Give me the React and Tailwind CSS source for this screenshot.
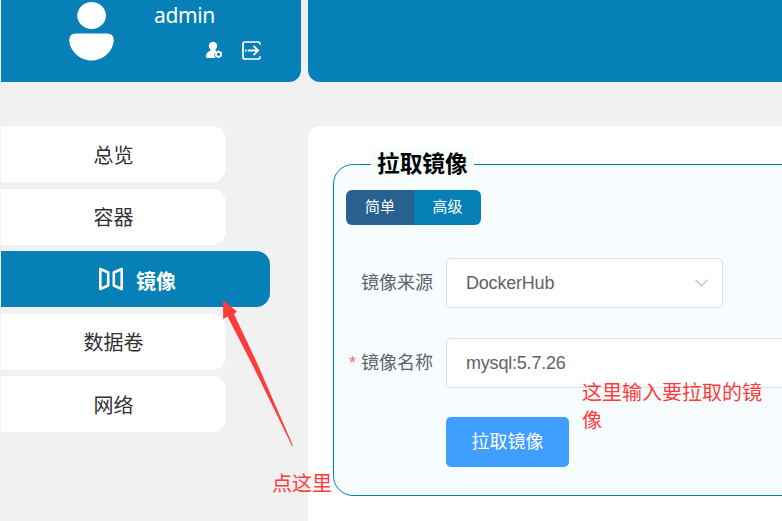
const cjk = "font-['Liberation_Sans','Noto_Sans_CJK_SC',sans-serif]";

function MenuItem({ label }) {
  return (
    <li className="flex h-14 w-[225px] shrink-0 items-center justify-center rounded-r-[14px] bg-white pt-[3px] text-[20px] leading-7 text-[#303133]">
      {label}
    </li>
  );
}

function Avatar() {
  return (
    <svg className="block" width="46" height="62" viewBox="0 0 46 62" fill="#fff">
      <ellipse cx="22.600" cy="15.500" rx="14.300" ry="13.600" />
      <path d="M7 33.500H38Q45 33.500 44.800 40.500C44 51 34.500 60.500 22.500 60.500S1 51 .2 40.500Q0 33.500 7 33.500Z" />
    </svg>
  );
}

function UserSettingIcon() {
  return (
    <svg width="18" height="18" viewBox="0 0 18 18" fill="none">
      <circle cx="8" cy="5" r="4.200" fill="#fff" />
      <path d="M5.700 7.500H10.300V9.500L11.500 10C9 11.500 8.600 14.500 10.300 17H2.300Q.8 17 .9 15.300C1 12.500 2.700 10.700 5.700 9.600Z" fill="#fff" />
      <circle cx="13.500" cy="13.300" r="2.500" stroke="#fff" strokeWidth="1.700" />
      <path d="M13.500 9.500V10.800M13.500 15.800V17.100M10.200 11.400L11.300 12M15.700 14.600L16.800 15.200M10.200 15.200L11.300 14.600M15.700 12L16.800 11.400" stroke="#fff" strokeWidth="1.500" />
    </svg>
  );
}

function LogoutIcon() {
  return (
    <svg width="19" height="19" viewBox="0 0 19 19" fill="none" stroke="#fff" strokeWidth="1.700">
      <path d="M18 3.800V3Q18 1 16 1H3Q1 1 1 3V16Q1 18 3 18H16Q18 18 18 16V15.200" />
      <path d="M3 9.500H4.600M5.800 9.500H16.200M11.500 4.800L16.200 9.500L11.500 14.200" strokeWidth="1.800" />
    </svg>
  );
}

function MirrorIcon() {
  return (
    <svg width="26" height="24" viewBox="0 0 26 24" fill="none" stroke="#fff" strokeWidth="2.600" strokeLinejoin="round">
      <path d="M2.300 2L10.200 5.500V18.500L2.300 22Z" />
      <path d="M23.700 2L15.800 5.500V18.500L23.700 22Z" />
    </svg>
  );
}

export default function App() {
  return (
    <div className={`relative h-[521px] w-[782px] overflow-hidden bg-[#f1f1f1] pl-px ${cjk}`}>
      <header className="flex h-[82px] gap-[7px]">
        <div className="flex w-[300px] shrink-0 rounded-br-xl bg-[#0680b7] pl-[68px] text-white">
          <Avatar />
          <div className="ml-[39px] flex flex-col">
            <span className="mt-px h-7 font-['Noto_Sans',sans-serif] text-[21px] leading-7 tracking-[-0.4px]">admin</span>
            <div className="ml-[51px] mt-3 flex items-start gap-[19px]">
              <UserSettingIcon />
              <LogoutIcon />
            </div>
          </div>
        </div>
        <div className="w-[474px] shrink-0 rounded-bl-xl bg-[#0680b7]" />
      </header>

      <div className="mt-11 flex h-[395px] gap-[38px]">
        <ul className="flex w-[269px] shrink-0 flex-col gap-[6.5px]">
          <MenuItem label="总览" />
          <MenuItem label="容器" />
          <li className="flex h-14 w-[269px] shrink-0 items-center gap-3 rounded-r-[14px] bg-[#0680b7] pl-[97px] text-[20px] leading-7 font-bold text-white">
            <MirrorIcon />
            <span className="pt-[5px]">镜像</span>
          </li>
          <MenuItem label="数据卷" />
          <MenuItem label="网络" />
        </ul>

        <main className="w-[474px] shrink-0 overflow-hidden rounded-tl-xl bg-white pl-[25px] pt-[21px]">
          <fieldset className="h-[349px] w-[600px] min-w-0 rounded-[20px] border border-[#0680b7] bg-[#f7fcff] pl-3">
            <legend className="ml-[25px] h-[34px] w-[103px] rounded-lg bg-[#f7fcff] pl-1.5 text-[22.700px] leading-[34px] font-bold whitespace-nowrap text-black">
              拉取镜像
            </legend>
            <div className="mt-[9px] flex h-[35px] w-[135px] overflow-hidden rounded-md text-[15px] text-white">
              <button className="w-[68px] bg-[#286090]">简单</button>
              <button className="w-[67px] bg-[#0680b7]">高级</button>
            </div>
            <div className="mt-[33px] flex h-[50px] items-center text-[18px] text-[#606266]">
              <label className="w-[87px] shrink-0 text-right">镜像来源</label>
              <div className="ml-[13px] flex h-[50px] w-[277px] items-center justify-between rounded-[5px] border border-[#dcdfe6] bg-white pl-[19px] pr-3.5">
                <span className="tracking-[-0.2px]">DockerHub</span>
                <svg width="13" height="8" viewBox="0 0 13 8" fill="none" stroke="#c0c4cc" strokeWidth="1.400">
                  <path d="M.5 .8L6.500 7L12.500 .8" />
                </svg>
              </div>
            </div>
            <div className="mt-[30px] flex h-[50px] items-center text-[18px] text-[#606266]">
              <label className="w-[87px] shrink-0 text-right whitespace-nowrap">
                <span className="mr-[5px] text-[#f56c6c]">*</span>镜像名称
              </label>
              <div className="ml-[13px] flex h-[50px] w-[440px] items-center rounded-[5px] border border-[#dcdfe6] bg-white pl-[19px] tracking-[-0.2px]">
                mysql:5.7.26
              </div>
            </div>
            <button className="ml-[100px] mt-[29px] block h-[50px] w-[123px] rounded-[5px] bg-[#409eff] text-[18px] text-white">
              拉取镜像
            </button>
          </fieldset>
        </main>
      </div>

      <svg className="absolute left-[220px] top-[298px]" width="76" height="152" viewBox="0 0 76 152" fill="#ff3b3b">
        <path d="M3 2L17 13.500L14 16L37 65L73 147.800L72.200 148.300L33 68L7.500 18.500L3.200 21Z" />
      </svg>
      <p className="absolute left-[272px] top-[470px] text-[20px] leading-7 whitespace-nowrap text-[#ff3b3b]">点这里</p>
      <p className="absolute left-[582px] top-[379px] w-[182px] text-[20px] leading-7 text-[#ff3b3b]">这里输入要拉取的镜像</p>
    </div>
  );
}
